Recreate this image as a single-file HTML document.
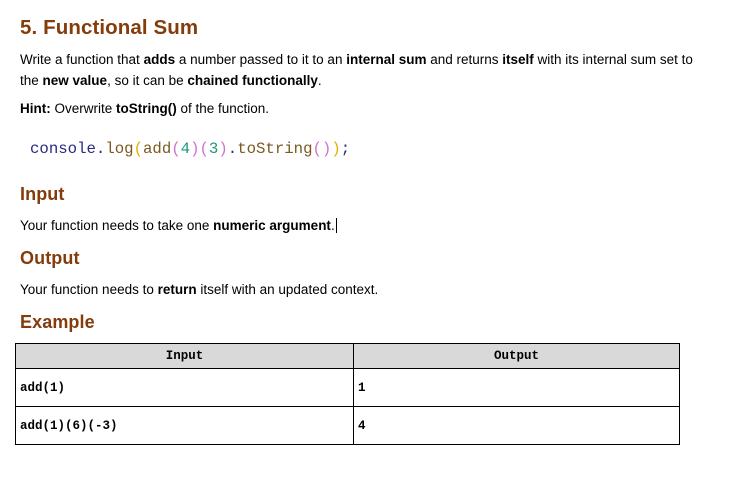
<!DOCTYPE html>
<html><head><meta charset="utf-8"><style>
body{margin:0;width:744px;height:483px;background:#fff;font-family:"Liberation Sans",sans-serif;color:#000;position:relative;overflow:hidden}
.a{position:absolute;white-space:nowrap}
h1,h2{margin:0;color:#843c0c;font-weight:bold;position:absolute;white-space:nowrap}
h1{font-size:20.5px;left:20px;top:16px;letter-spacing:0.1px}
h2{font-size:18px;left:20px;letter-spacing:0.1px}
.t{font-size:13.5px;left:20px}
.code{font-family:"Liberation Mono","DejaVu Sans Mono",monospace;font-size:15.7px;left:30px;top:140px;color:#2a2a7a}
table{position:absolute;left:15px;top:343px;width:665px;border-collapse:collapse;font-family:"Liberation Mono",monospace;font-size:12.5px;font-weight:bold}
td,th{border:1px solid #000;padding:0 4px;text-align:left}
th{background:#d9d9d9;height:24px;text-align:center}
td{height:37px}
</style></head><body>
<h1>5. Functional Sum</h1>
<div class="a t" style="top:52px">Write a function that <b>adds</b> a number passed to it to an <b>internal sum</b> and returns <b>itself</b> with its internal sum set to</div>
<div class="a t" style="top:73px">the <b>new value</b>, so it can be <b>chained functionally</b>.</div>
<div class="a t" style="top:101px"><b>Hint:</b> Overwrite <b>toString()</b> of the function.</div>
<div class="a code"><span>console</span>.<span style="color:#7a5a20">log</span><span style="color:#e0b000">(</span><span style="color:#7a5a20">add</span><span style="color:#d070d0">(</span><span style="color:#1a9a7a">4</span><span style="color:#d070d0">)(</span><span style="color:#1a9a7a">3</span><span style="color:#d070d0">)</span>.<span style="color:#7a5a20">toString</span><span style="color:#d070d0">()</span><span style="color:#e0b000">)</span>;</div>
<h2 style="top:184px">Input</h2>
<div class="a t" style="top:218px">Your function needs to take one <b>numeric argument</b>.<span style="border-left:1px solid #000;margin-left:1px"></span></div>
<h2 style="top:248px">Output</h2>
<div class="a t" style="top:282px">Your function needs to <b>return</b> itself with an updated context.</div>
<h2 style="top:312px">Example</h2>
<table>
<tr><th style="width:329px">Input</th><th>Output</th></tr>
<tr><td>add(1)</td><td>1</td></tr>
<tr><td>add(1)(6)(-3)</td><td>4</td></tr>
</table>
</body></html>
